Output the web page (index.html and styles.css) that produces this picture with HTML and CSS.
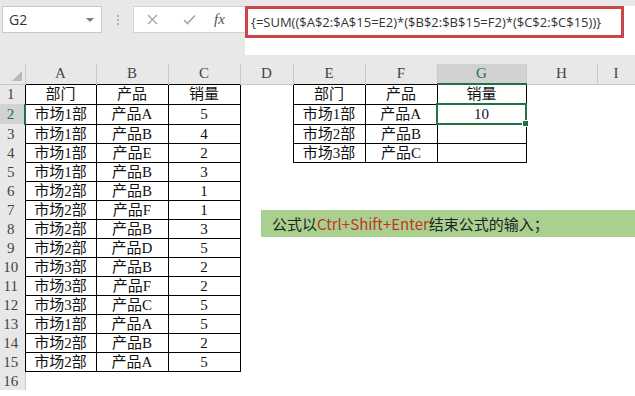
FILE: index.html
```html
<!DOCTYPE html>
<html lang="zh-CN">
<head>
  <meta charset="UTF-8">
  <title>公式</title>
  <link rel="stylesheet" href="styles.css">
</head>
<body>
  <div class="toolbar">
    <div class="namebox">
      <span>G2</span>
      <span class="arrow"></span>
    </div>
    <div class="grip"><i></i><i></i><i></i></div>
    <div class="btns">
      <svg class="ico x" width="11" height="11" viewBox="0 0 11 11"><path d="M1 1L10 10M10 1L1 10" stroke="#a6a6a6" stroke-width="1.4" fill="none"/></svg>
      <svg class="ico ok" width="13" height="11" viewBox="0 0 13 11"><path d="M1 6L4.5 9.5L12 1.5" stroke="#a6a6a6" stroke-width="1.6" fill="none"/></svg>
      <span class="fx">fx</span>
    </div>
    <div class="formula">
      <div class="formula-box">{=SUM(($A$2:$A$15=E2)*($B$2:$B$15=F2)*($C$2:$C$15))}</div>
    </div>
  </div>

  <table class="sheet">
    <colgroup>
      <col class="c-rh"><col class="c-a"><col class="c-b"><col class="c-c"><col class="c-d">
      <col class="c-e"><col class="c-f"><col class="c-g"><col class="c-h"><col class="c-i">
    </colgroup>
    <tr class="head">
      <th class="corner"><span class="tri"></span></th>
      <th>A</th><th>B</th><th>C</th><th>D</th><th>E</th><th>F</th><th class="cur">G</th><th>H</th><th>I</th>
    </tr>
    <tr class="r1">
      <td class="rh">1</td><td class="b">部门</td><td class="b">产品</td><td class="b">销量</td><td></td>
      <td class="b">部门</td><td class="b">产品</td><td class="b">销量</td><td></td><td></td>
    </tr>
    <tr>
      <td class="rh cur">2</td><td class="b">市场1部</td><td class="b">产品A</td><td class="b">5</td><td></td>
      <td class="b">市场1部</td><td class="b">产品A</td><td class="b sel">10<span class="handle"></span></td><td></td><td></td>
    </tr>
    <tr>
      <td class="rh">3</td><td class="b">市场1部</td><td class="b">产品B</td><td class="b">4</td><td></td>
      <td class="b">市场2部</td><td class="b">产品B</td><td class="b"></td><td></td><td></td>
    </tr>
    <tr>
      <td class="rh">4</td><td class="b">市场1部</td><td class="b">产品E</td><td class="b">2</td><td></td>
      <td class="b">市场3部</td><td class="b">产品C</td><td class="b"></td><td></td><td></td>
    </tr>
    <tr>
      <td class="rh">5</td><td class="b">市场1部</td><td class="b">产品B</td><td class="b">3</td><td></td><td></td><td></td><td></td><td></td><td></td>
    </tr>
    <tr>
      <td class="rh">6</td><td class="b">市场2部</td><td class="b">产品B</td><td class="b">1</td><td></td><td></td><td></td><td></td><td></td><td></td>
    </tr>
    <tr>
      <td class="rh">7</td><td class="b">市场2部</td><td class="b">产品F</td><td class="b">1</td><td></td><td></td><td></td><td></td><td></td><td></td>
    </tr>
    <tr>
      <td class="rh">8</td><td class="b">市场2部</td><td class="b">产品B</td><td class="b">3</td><td></td><td></td><td></td><td></td><td></td><td></td>
    </tr>
    <tr>
      <td class="rh">9</td><td class="b">市场2部</td><td class="b">产品D</td><td class="b">5</td><td></td><td></td><td></td><td></td><td></td><td></td>
    </tr>
    <tr>
      <td class="rh">10</td><td class="b">市场3部</td><td class="b">产品B</td><td class="b">2</td><td></td><td></td><td></td><td></td><td></td><td></td>
    </tr>
    <tr>
      <td class="rh">11</td><td class="b">市场3部</td><td class="b">产品F</td><td class="b">2</td><td></td><td></td><td></td><td></td><td></td><td></td>
    </tr>
    <tr>
      <td class="rh">12</td><td class="b">市场3部</td><td class="b">产品C</td><td class="b">5</td><td></td><td></td><td></td><td></td><td></td><td></td>
    </tr>
    <tr>
      <td class="rh">13</td><td class="b">市场1部</td><td class="b">产品A</td><td class="b">5</td><td></td><td></td><td></td><td></td><td></td><td></td>
    </tr>
    <tr>
      <td class="rh">14</td><td class="b">市场2部</td><td class="b">产品B</td><td class="b">2</td><td></td><td></td><td></td><td></td><td></td><td></td>
    </tr>
    <tr>
      <td class="rh">15</td><td class="b">市场2部</td><td class="b">产品A</td><td class="b">5</td><td></td><td></td><td></td><td></td><td></td><td></td>
    </tr>
    <tr>
      <td class="rh last">16</td><td></td><td></td><td></td><td></td><td></td><td></td><td></td><td></td><td></td>
    </tr>
  </table>

  <div class="note">公式以<span class="key">Ctrl+Shift+Enter</span>结束公式的输入；</div>
</body>
</html>
```

FILE: styles.css
```css
body {
  margin: 0;
  width: 635px;
  height: 396px;
  overflow: hidden;
  background: #fff;
  position: relative;
  font-family: 'Liberation Serif', 'Noto Sans CJK SC', serif;
}

/* formula bar */
.toolbar {
  display: flex;
  align-items: flex-start;
  height: 64px;
  padding-top: 6px;
  box-sizing: border-box;
  background: #e8e8e8;
}

.namebox {
  margin-left: 2px;
  width: 100px;
  height: 27px;
  box-sizing: border-box;
  background: #fff;
  border: 1px solid #c8c8c8;
  display: flex;
  align-items: center;
  justify-content: space-between;
  padding: 0 7px 0 6px;
  font-family: 'Open Sans', 'Noto Sans', sans-serif;
  font-size: 14px;
  color: #333;
}

.arrow {
  width: 0;
  height: 0;
  border-left: 4px solid transparent;
  border-right: 4px solid transparent;
  border-top: 4px solid #7a7a7a;
}

.grip {
  width: 31px;
  height: 27px;
  display: flex;
  flex-direction: column;
  align-items: center;
  justify-content: center;
  gap: 2px;
}

.grip i {
  width: 2px;
  height: 2px;
  background: #b3b3b3;
}

.btns {
  width: 113px;
  height: 27px;
  box-sizing: border-box;
  background: #fff;
  border: 1px solid #d2d2d2;
  display: flex;
  align-items: center;
  padding-left: 13px;
}

.ico.ok {
  margin-left: 25px;
}

.fx {
  font-family: 'Liberation Serif', serif;
  font-style: italic;
  font-size: 15px;
  color: #555;
  margin-left: 18px;
}

.formula {
  flex: 1;
  height: 49px;
  margin-left: -1px;
  background: #fff;
}

.formula-box {
  width: 379px;
  height: 32px;
  box-sizing: border-box;
  border: 3px solid #cc454b;
  padding: 4px 0 0 3px;
  font-family: 'Open Sans', 'Noto Sans', sans-serif;
  font-size: 13px;
  color: #333;
  white-space: nowrap;
}

/* grid */
.sheet {
  border-collapse: collapse;
  table-layout: fixed;
  width: 635px;
  font-size: 15px;
}

.c-rh { width: 25px; }
.c-a { width: 71px; }
.c-b, .c-c, .c-e, .c-f { width: 72px; }
.c-d { width: 53px; }
.c-g { width: 89px; }
.c-h { width: 71px; }
.c-i { width: 38px; }

.head th {
  height: 19px;
  padding: 0;
  background: #e8e8e8;
  border-right: 1px solid #c8c8c8;
  font-weight: normal;
  font-size: 15px;
  color: #444;
  line-height: 19px;
}

.head th.cur {
  background: #d2d2d2;
  border-bottom: 2px solid #217346;
  color: #217346;
}

.corner {
  position: relative;
}

.tri {
  position: absolute;
  right: 3px;
  bottom: 3px;
  width: 0;
  height: 0;
  border-left: 10px solid transparent;
  border-bottom: 10px solid #b8b8b8;
}

td {
  height: 18px;
  padding: 0;
  text-align: center;
  line-height: 18px;
  color: #111;
  white-space: nowrap;
}

.r1 td {
  border-top: 1px solid #c8c8c8;
}

td.b {
  border: 1px solid #000;
}

td.rh {
  background: #e8e8e8;
  color: #444;
  padding-right: 3px;
}

td.rh.cur {
  background: #d2d2d2;
  border-right: 2px solid #217346;
  color: #217346;
}

td.rh.last {
  border-right: 1px solid #c8c8c8;
}

td.sel {
  border: 2px solid #217346;
  position: relative;
}

.handle {
  position: absolute;
  right: -4px;
  bottom: -4px;
  width: 5px;
  height: 5px;
  background: #217346;
  border: 1px solid #fff;
}

/* note shape */
.note {
  position: absolute;
  left: 261px;
  top: 210px;
  width: 374px;
  height: 27px;
  box-sizing: border-box;
  padding-left: 11px;
  background: #a9d08e;
  font-family: 'Noto Sans CJK SC', 'Noto Sans', sans-serif;
  font-size: 15px;
  line-height: 27px;
  color: #222;
}

.key {
  color: #c5341e;
}
```
